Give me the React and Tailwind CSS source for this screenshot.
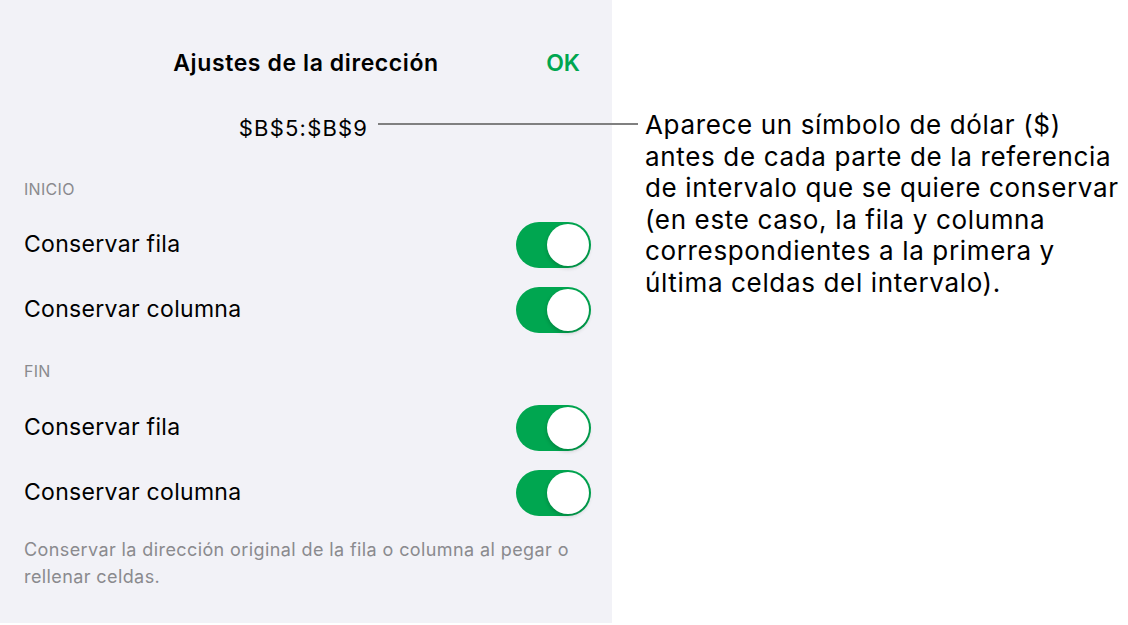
const Toggle = () => (
  <div className="w-[75px] h-[46px] rounded-full bg-[#00a650] flex items-center justify-end pr-[2px]">
    <div className="w-[42px] h-[42px] rounded-full bg-white shadow-[0_2px_4px_rgba(0,0,0,0.2)]" />
  </div>
);

const Row = ({ label }) => (
  <div className="h-[65px] flex items-center justify-between pl-[24px] pr-[21px]">
    <span className="text-[23px] tracking-[0.3px] text-black">{label}</span>
    <Toggle />
  </div>
);

export default function App() {
  return (
    <div
      className="relative w-[1128px] h-[625px] bg-white flex overflow-hidden"
      style={{ fontFamily: 'Inter, "Liberation Sans", sans-serif' }}
    >
      {/* settings panel */}
      <div className="w-[612px] h-[623px] bg-[#f2f2f7] flex flex-col">
        <div className="relative pt-[49px] flex justify-center">
          <span className="text-[23px] leading-[28px] tracking-[0.6px] font-semibold text-black">Ajustes de la dirección</span>
          <span className="absolute right-[32px] top-[49px] text-[23px] leading-[28px] font-semibold text-[#00a650]">OK</span>
        </div>
        <div className="mt-[38px] flex justify-center">
          <span className="text-[22px] leading-[26px] tracking-[1.2px] text-black pr-[5px]">$B$5:$B$9</span>
        </div>
        <div className="mt-[38px] px-[24px] text-[16px] leading-[20px] tracking-[0.3px] text-[#8a8a8e]">INICIO</div>
        <div className="mt-[13px]">
          <Row label="Conservar fila" />
          <Row label="Conservar columna" />
        </div>
        <div className="mt-[19px] px-[24px] text-[16px] leading-[20px] tracking-[0.3px] text-[#8a8a8e]">FIN</div>
        <div className="mt-[14px]">
          <Row label="Conservar fila" />
          <Row label="Conservar columna" />
        </div>
        <p className="mt-[11px] px-[24px] text-[18px] leading-[27px] tracking-[0.4px] text-[#8a8a8e]">
          Conservar la dirección original de la fila o columna al pegar o
          <br />
          rellenar celdas.
        </p>
      </div>

      {/* callout */}
      <div className="pl-[33px] pt-[109px] text-[26px] leading-[31.5px] tracking-[0.65px] text-black">
        Aparece un símbolo de dólar ($)
        <br />
        antes de cada parte de la referencia
        <br />
        de intervalo que se quiere conservar
        <br />
        (en este caso, la fila y columna
        <br />
        correspondientes a la primera y
        <br />
        última celdas del intervalo).
      </div>

      <div className="absolute left-[378px] top-[123px] w-[260px] h-[2px] bg-[#808080]" />
    </div>
  );
}
